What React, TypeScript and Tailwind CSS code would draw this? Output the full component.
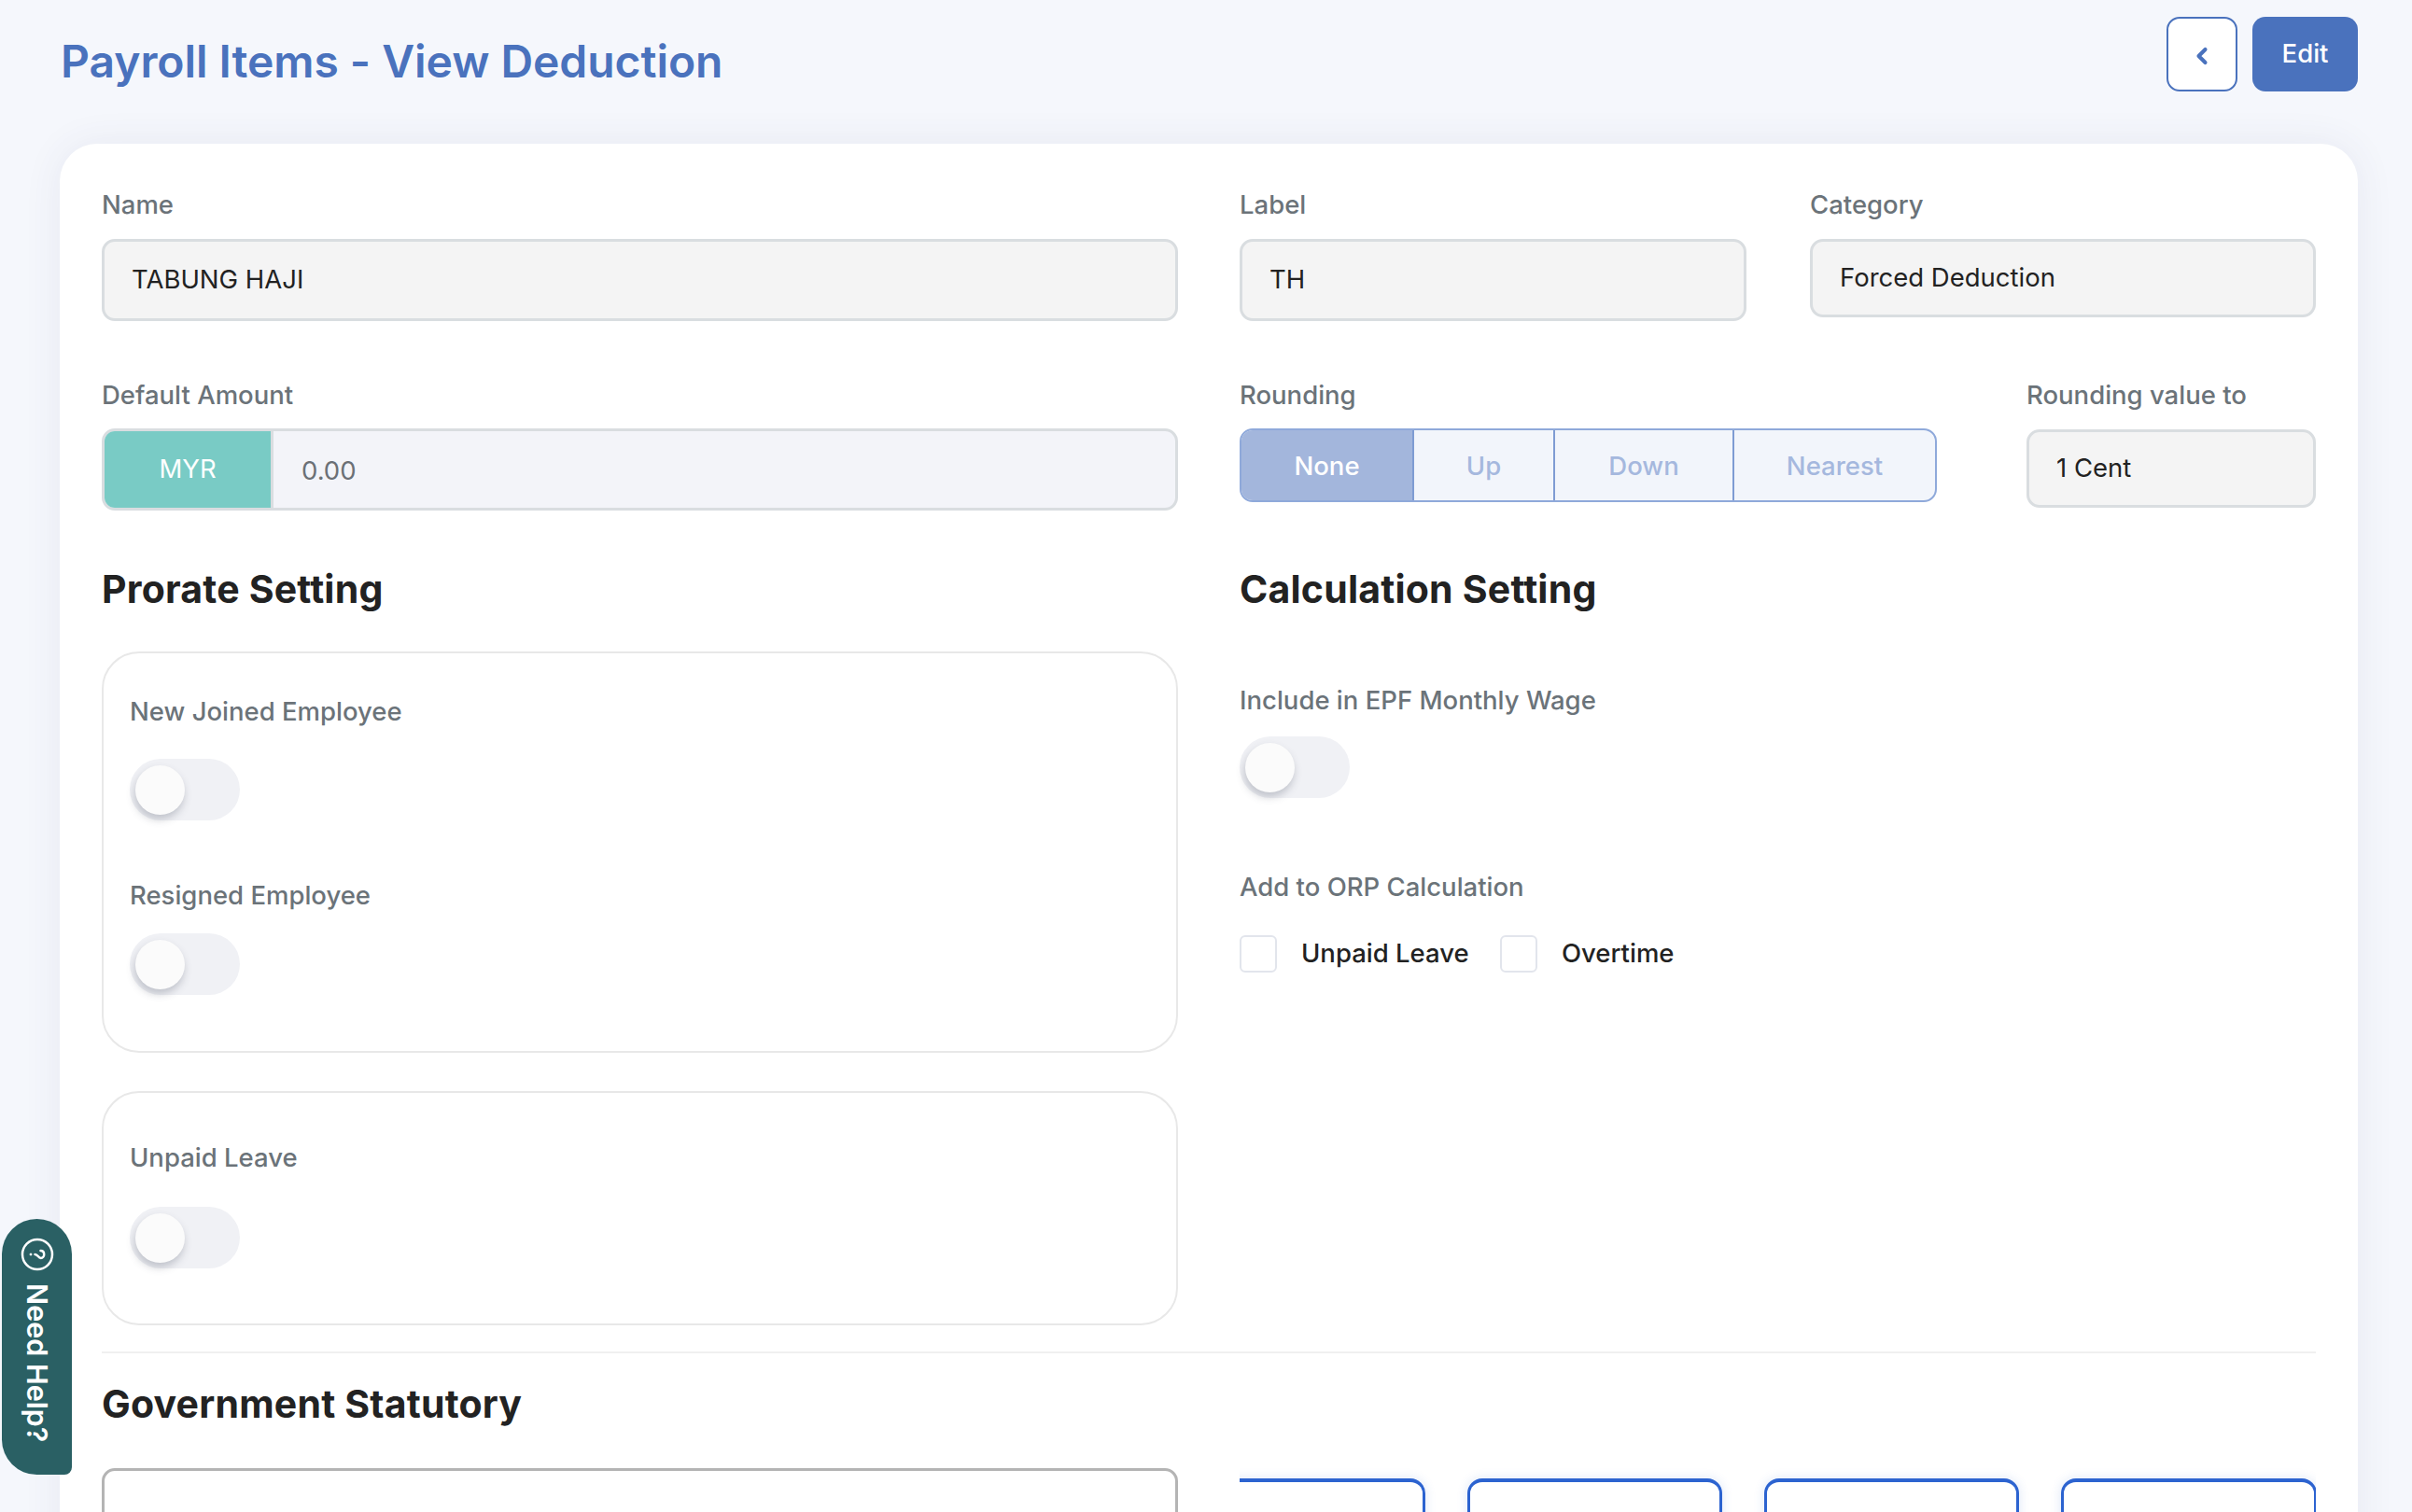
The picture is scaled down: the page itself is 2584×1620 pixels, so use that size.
import React from "react";
import { ChevronLeft } from "lucide-react";

function Label({ children, className = "" }: { children: React.ReactNode; className?: string }) {
  return <div className={`h-10 text-[27.5px] leading-10 font-medium text-[#6b7379] ${className}`}>{children}</div>;
}

function Field({ value, className = "h-[88px]" }: { value: string; className?: string }) {
  return (
    <div className={`mt-[17px] flex items-center rounded-[14px] border-[3px] border-[#d9dde0] bg-[#f4f4f4] pl-[29px] text-[27.5px] text-[#222222] ${className}`}>
      {value}
    </div>
  );
}

function Toggle({ className = "" }: { className?: string }) {
  return (
    <div className={`flex h-[66px] w-[118px] items-center rounded-full bg-[#f0f1f5] pl-[6px] ${className}`}>
      <div className="h-[53px] w-[53px] rounded-full bg-[#fbfbfb] shadow-[-1px_5px_8px_rgba(70,75,95,0.28)]" />
    </div>
  );
}

function Heading({ children, className = "" }: { children: React.ReactNode; className?: string }) {
  return <h2 className={`h-14 text-[41px] leading-[55px] font-bold tracking-[0.2px] text-[#222222] ${className}`}>{children}</h2>;
}

function Check() {
  return <div className="h-10 w-10 rounded-[6px] border-2 border-[#e2e5ec] bg-white" />;
}

function Seg({ children, className }: { children: string; className: string }) {
  return <div className={`flex items-center justify-center pt-[2px] text-[27.5px] font-medium ${className}`}>{children}</div>;
}

function Tile({ className }: { className: string }) {
  return <div className={`h-[120px] shrink-0 rounded-[16px] border-x-[3px] border-t-4 border-[#2c63d0] bg-white shadow-[0_0_12px_rgba(44,99,208,0.16)] ${className}`} />;
}

export default function App() {
  return (
    <div className="relative h-[1620px] overflow-hidden bg-[#f5f7fc] font-['Inter','Liberation_Sans',sans-serif]">
      <header className="flex h-[154px] items-start justify-between pt-[18px] pr-[58px] pl-[65px]">
        <h1 className="mt-[23px] text-[48px] leading-[50px] font-semibold tracking-[-0.05px] text-[#4a72bd]">Payroll Items - View Deduction</h1>
        <div className="flex gap-[16px]">
          <button className="flex h-[80px] w-[76px] items-center justify-center rounded-[14px] border-2 border-[#4a72bd] bg-white pt-1 text-[#4a72bd]">
            <ChevronLeft size={28} strokeWidth={3.5} />
          </button>
          <button className="flex h-[80px] w-[113px] items-center justify-center rounded-[14px] bg-[#4a72bd] text-[27.5px] font-medium text-white">Edit</button>
        </div>
      </header>

      <main className="mr-[58px] ml-[64px] rounded-t-[40px] bg-white pt-[45px] pr-[45px] pb-[100px] pl-[45px] shadow-[0_0_40px_rgba(60,70,120,0.08)]">
        <div className="grid grid-cols-[1153px_1153px] gap-x-[66px]">
          <div>
            <Label>Name</Label>
            <Field value="TABUNG HAJI" />
          </div>
          <div className="flex justify-between">
            <div className="w-[543px]">
              <Label>Label</Label>
              <Field value="TH" />
            </div>
            <div className="w-[542px]">
              <Label>Category</Label>
              <Field value="Forced Deduction" className="h-[84px]" />
            </div>
          </div>

          <div className="mt-[59px]">
            <Label>Default Amount</Label>
            <div className="mt-[16px] flex h-[88px] overflow-hidden rounded-[14px] border-[3px] border-[#d9dde0] bg-[#f3f4f9]">
              <div className="flex w-[181px] items-center justify-center border-r-[3px] border-[#d9dde0] bg-[#79cbc5] text-[27.5px] text-white">MYR</div>
              <div className="flex items-center pt-1 pl-[30px] text-[27.5px] text-[#6b7076]">0.00</div>
            </div>
          </div>
          <div className="mt-[59px] flex justify-between">
            <div className="w-[747px]">
              <Label>Rounding</Label>
              <div className="mt-[16px] flex h-[79px] overflow-hidden rounded-[14px] border-2 border-[#8fa9da] bg-[#f2f5fb] text-[#a5b8de]">
                <Seg className="w-[185px] border-r-2 border-[#7f9cd3] bg-[#a3b6dc] text-white">None</Seg>
                <Seg className="w-[151px] border-r-2 border-[#7f9cd3]">Up</Seg>
                <Seg className="w-[192px] border-r-2 border-[#7f9cd3]">Down</Seg>
                <Seg className="flex-1">Nearest</Seg>
              </div>
            </div>
            <div className="w-[310px]">
              <Label>Rounding value to</Label>
              <Field value="1 Cent" className="mt-[15px] h-[84px]" />
            </div>
          </div>

          <div className="mt-[57px]">
            <Heading>Prorate Setting</Heading>
            <section className="mt-[38px] h-[430px] rounded-[40px] border-2 border-[#e8e8e8] pt-[42px] pl-[28px]">
              <Label>New Joined Employee</Label>
              <Toggle className="mt-[31px]" />
              <Label className="mt-[60px]">Resigned Employee</Label>
              <Toggle className="mt-[21px]" />
            </section>
            <section className="mt-[41px] h-[251px] rounded-[40px] border-2 border-[#e8e8e8] pt-[49px] pl-[28px]">
              <Label>Unpaid Leave</Label>
              <Toggle className="mt-[33px]" />
            </section>
          </div>
          <div className="mt-[57px]">
            <Heading>Calculation Setting</Heading>
            <Label className="mt-[70px]">Include in EPF Monthly Wage</Label>
            <Toggle className="mt-[19px]" />
            <Label className="mt-[75px]">Add to ORP Calculation</Label>
            <div className="mt-[31px] flex items-center text-[27.5px] font-medium text-[#222222]">
              <Check />
              <span className="ml-[26px] w-[213px]">Unpaid Leave</span>
              <Check />
              <span className="ml-[26px]">Overtime</span>
            </div>
          </div>
        </div>

        <div className="mt-[28px] h-[2px] bg-[#f0f0f0]" />
        <Heading className="mt-[27px]">Government Statutory</Heading>

        <div className="mt-[40px] grid grid-cols-[1153px_1153px] gap-x-[66px]">
          <div className="h-[120px] rounded-[14px] border-[3px] border-[#b4b4b4] bg-white" />
          <div className="-mt-[1px] flex gap-[45px] overflow-hidden pt-3">
            <Tile className="-ml-[74px] w-[273px]" />
            <Tile className="w-[273px]" />
            <Tile className="w-[273px]" />
            <Tile className="w-[274px]" />
          </div>
        </div>
      </main>

      <aside className="absolute top-[1306px] left-[2px] flex h-[274px] w-[75px] flex-col items-center rounded-t-[38px] rounded-b-[38px] rounded-br-[8px] bg-[#2a6064] pt-[20px] text-white">
        <svg width="36" height="36" viewBox="0 0 36 36" fill="none" stroke="white" className="rotate-90">
          <circle cx="18" cy="18" r="16" strokeWidth="2.5" />
          <path d="M14 14.5c0-2.3 1.8-3.7 4-3.7s4 1.4 4 3.4c0 3-4 3-4 6.3" strokeWidth="2.5" strokeLinecap="round" />
          <circle cx="18" cy="25" r="1" fill="white" strokeWidth="1" />
        </svg>
        <span className="mt-[13px] text-[30.5px] leading-9 font-semibold text-white [writing-mode:vertical-rl]">Need Help?</span>
      </aside>
    </div>
  );
}
